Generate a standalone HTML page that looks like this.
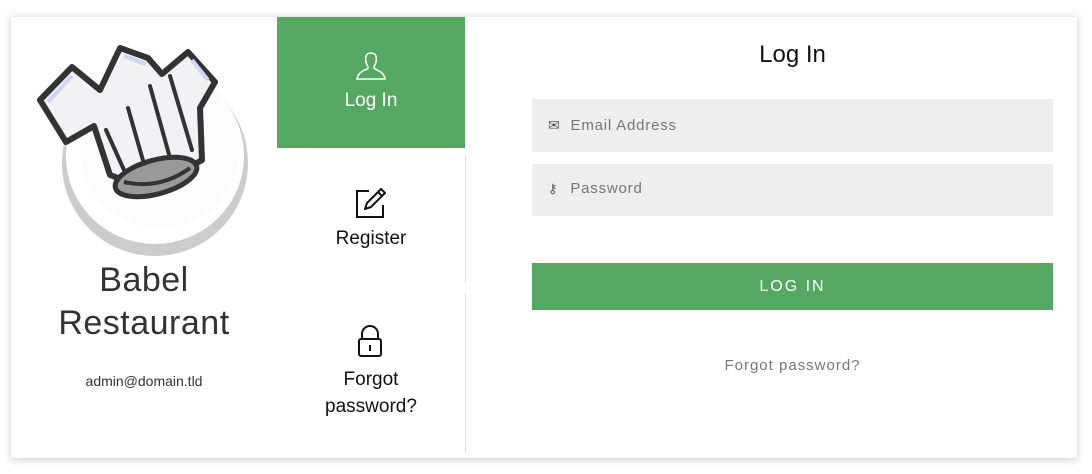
<!DOCTYPE html>
<html><head><style>
body{margin:0;width:1092px;height:474px;background:#fff;font-family:"Liberation Sans",sans-serif;overflow:hidden;position:relative}
.card{position:absolute;left:11px;top:17px;width:1066px;height:441px;background:#fff;box-shadow:0 1px 8px rgba(0,0,0,.22)}
.abs{position:absolute}
.t{text-align:center;color:#222}
.nav{position:absolute;left:266px;width:188px;text-align:center;font-size:19px;color:#111}
.field{position:absolute;left:521px;width:521px;background:#eee;color:#777;font-size:15px;letter-spacing:.8px}
</style></head><body>
<div class="card">
<svg class="abs" style="left:9px;top:3px" width="240" height="240" viewBox="20 20 240 240">
<circle cx="155" cy="163" r="93" fill="#ccc"/>
<ellipse cx="155" cy="156" rx="89" ry="88" fill="#fff"/>
<ellipse cx="160" cy="148" rx="80" ry="80" fill="#fcfcfc"/>
<path d="M40 100 L72 67 L100 90 L120 48 L148 58 L162 74 L188 52 L215 82 L200 108 L202 160 L150 190 L110 175 L94 126 L66 142 Z" fill="#f2f2f4" stroke="#333" stroke-width="6" stroke-linejoin="round"/>
<path d="M48 102 L72 76 M124 56 L146 64 M192 60 L208 80" stroke="#cdd5ff" stroke-width="4"/>
<ellipse cx="156" cy="177" rx="42" ry="17" transform="rotate(-15 156 177)" fill="#999" stroke="#333" stroke-width="5"/>
<path d="M124 182 Q160 190 190 168" stroke="#333" stroke-width="4" fill="none"/>
<path d="M106 130 L124 170 M128 108 L144 164 M150 86 L170 158 M170 76 L192 150" stroke="#333" stroke-width="4" stroke-linecap="round"/>
</svg>
<div class="abs t" style="left:0;width:266px;top:242px;font-size:34px;line-height:43px;color:#333;letter-spacing:.5px">Babel<br>Restaurant</div>
<div class="abs t" style="left:0;width:266px;top:356px;font-size:14px;color:#333">admin@domain.tld</div>

<div class="abs" style="left:266px;top:0;width:188px;height:131px;background:#55a862"></div>
<svg class="abs" style="left:344px;top:34px" width="32" height="30" viewBox="0 0 32 30"><path d="M16 2c-5 0-6 4-5 9 1 3 2 4 2 6-1 2-10 3-11 11h28c-1-8-10-9-11-11 0-2 1-3 2-6 1-5 0-9-5-9z" fill="none" stroke="#fff" stroke-width="1.6"/></svg>
<div class="nav" style="top:73px;color:#fff">Log In</div>
<div class="abs" style="left:454px;top:138px;width:1px;height:128px;background:#ddd"></div>
<div class="abs" style="left:454px;top:276px;width:1px;height:160px;background:#ddd"></div>
<svg class="abs" style="left:344px;top:170px" width="32" height="32" viewBox="0 0 32 32"><path d="M14 4H2v26h26V18" fill="none" stroke="#111" stroke-width="2"/><path d="M26 2l4 4-14 14-6 2 2-6z M23 5l4 4" fill="none" stroke="#111" stroke-width="2" stroke-linejoin="round"/></svg>
<div class="nav" style="top:211px">Register</div>
<svg class="abs" style="left:346px;top:308px" width="26" height="34" viewBox="0 0 26 34"><path d="M5 14V9a8 8 0 0 1 16 0v5" fill="none" stroke="#111" stroke-width="2"/><rect x="2" y="14" width="22" height="17" rx="2" fill="none" stroke="#111" stroke-width="2"/><rect x="12" y="20" width="2" height="6" fill="#111"/></svg>
<div class="nav" style="top:349px;line-height:27px">Forgot<br>password?</div>

<div class="abs t" style="left:521px;width:521px;top:24px;font-size:24px;color:#111">Log In</div>
<div class="field" style="top:82px;height:53px;line-height:52px"><span style="margin-left:16px;font-size:14px;color:#556">✉</span><span style="margin-left:10px">Email Address</span></div>
<div class="field" style="top:147px;height:52px;line-height:50px"><span style="margin-left:16px;font-size:13px;color:#556">⚷</span><span style="margin-left:12px">Password</span></div>
<div class="abs t" style="left:521px;width:521px;top:246px;height:47px;line-height:47px;background:#55a862;color:#fff;font-size:16px;letter-spacing:2px">LOG IN</div>
<div class="abs t" style="left:521px;width:521px;top:340px;font-size:15px;color:#777;letter-spacing:1px">Forgot password?</div>
</div>
</body></html>
